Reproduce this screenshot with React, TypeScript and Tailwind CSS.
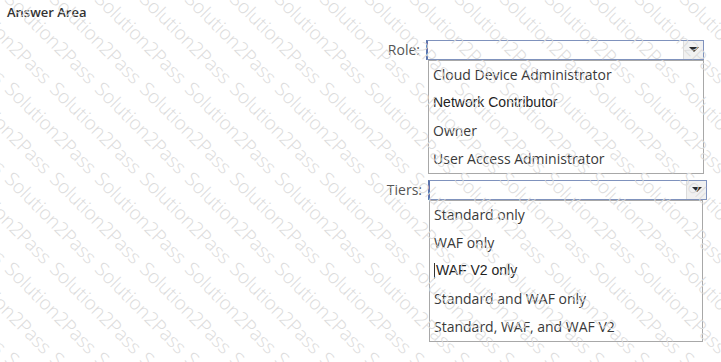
import React from "react";

const SEGOE = "font-['Segoe_UI','Open_Sans',sans-serif]";
const ARIAL = "font-['Liberation_Sans',Arial,sans-serif]";

function Watermark() {
  const items: { x: number; y: number }[] = [];
  for (let k = -1; k <= 4; k++) {
    for (let j = -3; j <= 16; j++) {
      items.push({ x: 3 + 45 * j, y: -5 + 90 * k });
    }
  }
  return (
    <div className="pointer-events-none absolute inset-0 overflow-hidden">
      {items.map((p, i) => (
        <span
          key={i}
          className="absolute origin-top-left rotate-45 whitespace-nowrap font-['Open_Sans',sans-serif] text-[19px] font-light leading-none text-[#dcdcdc]"
          style={{ left: p.x + 12, top: p.y - 6 }}
        >
          Solution2Pass
        </span>
      ))}
    </div>
  );
}

function SelectBox({ w }: { w: string }) {
  return (
    <div className={`flex h-[20px] ${w} border border-[#7f92bd] border-l-[2px] border-l-[#5b74ad] bg-white`}>
      <div className="flex-1" />
      <div className="flex w-[20px] items-center justify-center border-l border-[#dcdcdc] bg-[#f1f1f1]">
        <svg width="10" height="5" viewBox="0 0 10 5">
          <path d="M0 0 H10 L5 5 Z" fill="#2b2b2b" />
        </svg>
      </div>
    </div>
  );
}

function Item({ children, arial, caret }: { children: React.ReactNode; arial?: boolean; caret?: boolean }) {
  return (
    <div
      className={`flex h-[28px] items-center pl-[4px] text-[14px] ${arial ? ARIAL + " text-[#1f1f1f]" : SEGOE + " text-[#3a3a3a]"}`}
    >
      {caret && <span className="mr-[1px] inline-block h-[16px] w-px bg-[#333]" />}
      {children}
    </div>
  );
}

export default function App() {
  return (
    <div className="relative h-[362px] w-[721px] overflow-hidden bg-white">
      <div className={`pl-[7px] pt-[3px] text-[13px] font-semibold text-[#333] ${SEGOE}`}>Answer Area</div>

      <div className="mt-[17px] flex flex-col">
        {/* Role */}
        <div className="flex">
          <div className={`w-[421px] pr-[1px] text-right text-[14px] leading-[20px] text-[#555] ${SEGOE}`}>Role:</div>
          <div className="ml-[5px] flex flex-col">
            <SelectBox w="w-[278px]" />
            <div className="ml-[2px] w-[276px] border border-[#a8a8a8] bg-white">
              <Item>Cloud Device Administrator</Item>
              <Item arial>Network Contributor</Item>
              <Item>Owner</Item>
              <Item>User Access Administrator</Item>
            </div>
          </div>
        </div>

        {/* Tiers */}
        <div className="mt-[6px] flex">
          <div className={`w-[423px] pr-[1px] text-right text-[14px] leading-[20px] text-[#555] ${SEGOE}`}>Tiers:</div>
          <div className="ml-[5px] flex flex-col">
            <SelectBox w="w-[279px]" />
            <div className="ml-[1px] w-[274px] border border-[#a8a8a8] bg-white">
              <Item>Standard only</Item>
              <Item>WAF only</Item>
              <Item arial caret>WAF V2 only</Item>
              <Item>Standard and WAF only</Item>
              <Item>Standard, WAF, and WAF V2</Item>
            </div>
          </div>
        </div>
      </div>

      <Watermark />
    </div>
  );
}
